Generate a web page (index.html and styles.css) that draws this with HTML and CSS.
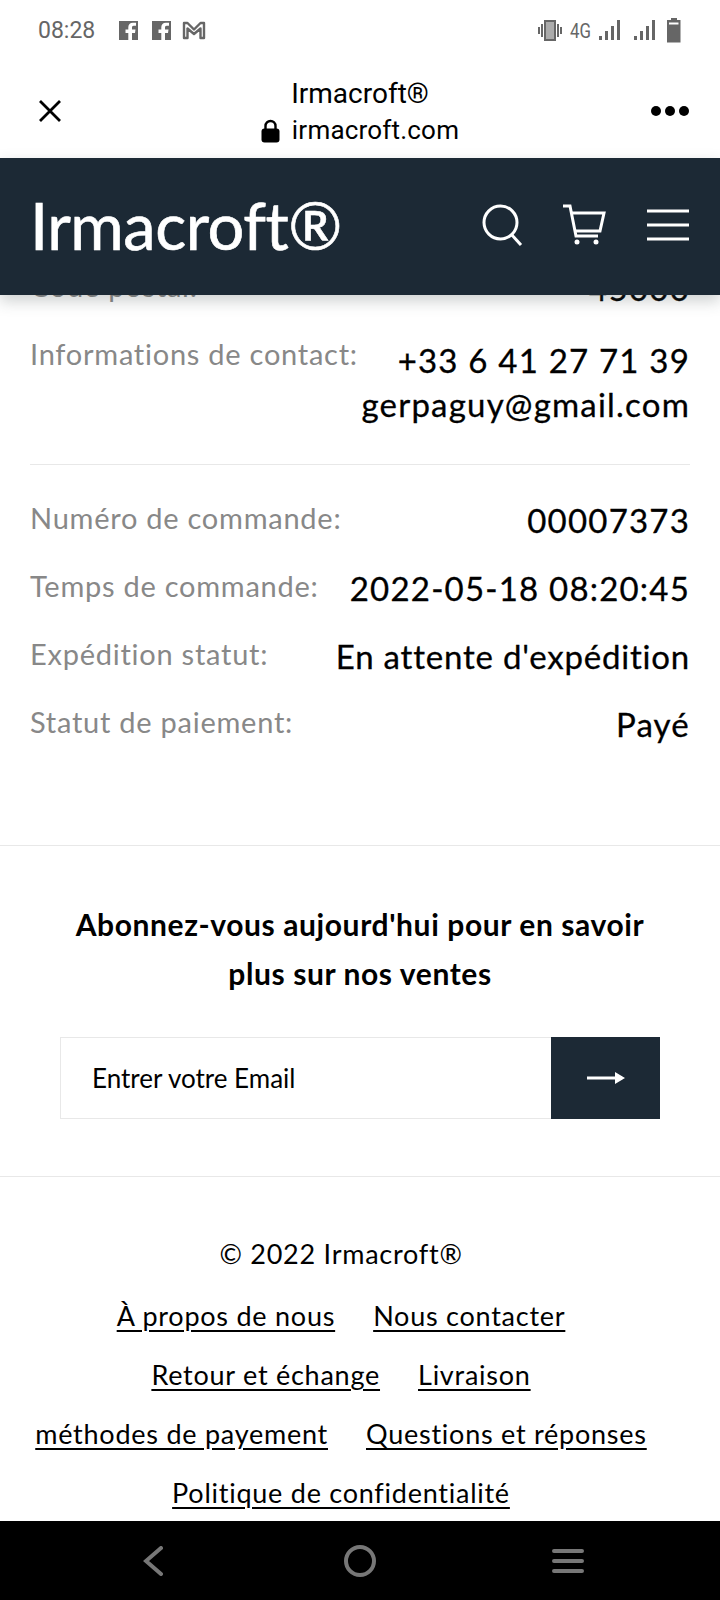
FILE: index.html
```html
<!DOCTYPE html>
<html lang="fr">

<head>
    <meta charset="UTF-8">
    <meta name="viewport" content="width=device-width, initial-scale=1.0">
    <title>Irmacroft®</title>
    <link rel="stylesheet" href="styles.css">
</head>

<body>
    <div id="phone">
        <div class="status flex-row">
            <span class="clock">08:28</span>
            <svg class="notif" width="88" height="22" viewBox="0 0 88 22">
                <path fill="#666" d="M1 2h19v19h-6v-7h3l.5-3.5H14V8.500c0-1 .5-1.700 1.700-1.700H18V3.700h-3c-3 0-4.700 1.800-4.700 4.500v2.300H7.500V14h2.800v7H1z"/>
                <path fill="#666" d="M34 2h19v19h-6v-7h3l.5-3.5H47V8.500c0-1 .5-1.700 1.700-1.700H51V3.700h-3c-3 0-4.700 1.800-4.700 4.500v2.300h-2.800V14h2.800v7H34z"/>
                <path fill="none" stroke="#666" stroke-width="2.400" stroke-linejoin="round" d="M66 4h3.500l6.500 6.500L82.500 4H86v15h-3.500V9.500L76 15l-6.500-5.500V19H66z"/>
            </svg>
            <span class="spring"></span>
            <svg width="148" height="26" viewBox="0 0 148 26">
                <g fill="#666">
                    <rect x="4" y="10" width="2" height="7"/>
                    <rect x="7" y="7" width="2" height="13"/>
                    <path d="M10 3h12v21H10zm2 2v17h8V5z"/>
                    <rect x="12" y="5" width="8" height="17" opacity=".55"/>
                    <rect x="23" y="7" width="2" height="13"/>
                    <rect x="26" y="10" width="2" height="7"/>
                    <rect x="65" y="19" width="3" height="4"/>
                    <rect x="71" y="14" width="3" height="9"/>
                    <rect x="77" y="9" width="3" height="14"/>
                    <rect x="83" y="3" width="3" height="20"/>
                    <rect x="100" y="19" width="3" height="4"/>
                    <rect x="106" y="14" width="3" height="9"/>
                    <rect x="112" y="9" width="3" height="14"/>
                    <rect x="118" y="3" width="3" height="20"/>
                    <path d="M137 1h6v2h3.500v22.500H133V3h4zM135 5.500v2h9.500v-2z"/>
                </g>
                <text x="36" y="21" class="net" textLength="21" lengthAdjust="spacingAndGlyphs">4G</text>
            </svg>
        </div>

        <div class="browser flex-row">
            <svg class="close" width="24" height="24" viewBox="0 0 24 24">
                <path fill="none" stroke="#000" stroke-width="2.800" d="M2 2l20 20M22 2L2 22"/>
            </svg>
            <div class="page-id">
                <div class="page-title">Irmacroft®</div>
                <div class="page-url">
                    <svg width="19" height="24" viewBox="0 0 19 24">
                        <path fill="none" stroke="#000" stroke-width="2.400" d="M4.500 11V7a5 5 0 0 1 10 0v4"/>
                        <rect x="0.500" y="9.500" width="18" height="14" rx="3"/>
                    </svg>
                    <span>irmacroft.com</span>
                </div>
            </div>
            <svg class="dots" width="40" height="12" viewBox="0 0 40 12">
                <circle cx="6" cy="6" r="5"/>
                <circle cx="20" cy="6" r="5"/>
                <circle cx="34" cy="6" r="5"/>
            </svg>
        </div>

        <header class="site-head flex-row">
            <a class="logo">Irmacroft®</a>
            <svg class="head-icon search" width="42" height="42" viewBox="0 0 42 42">
                <circle cx="18.500" cy="18.500" r="16.500"/>
                <path d="M29 30l10 11"/>
            </svg>
            <svg class="head-icon cart" width="44" height="42" viewBox="0 0 44 42">
                <path d="M1 2h7l6 30h22"/>
                <path d="M9 9h33l-4 18H13"/>
                <circle cx="15" cy="38" r="2.500" class="fill"/>
                <circle cx="34" cy="38" r="2.500" class="fill"/>
            </svg>
            <svg class="head-icon burger" width="42" height="32" viewBox="0 0 42 32">
                <path d="M0 2h42M0 16h42M0 30h42"/>
            </svg>
        </header>

        <main class="scroll">
            <section class="order">
                <div class="row">
                    <span class="label">Code postal:</span>
                    <span class="value">45000</span>
                </div>
                <div class="row contact">
                    <span class="label">Informations de contact:</span>
                    <span class="value">+33 6 41 27 71 39<br>gerpaguy@gmail.com</span>
                </div>
                <div class="rule"></div>
                <div class="row">
                    <span class="label">Numéro de commande:</span>
                    <span class="value">00007373</span>
                </div>
                <div class="row">
                    <span class="label">Temps de commande:</span>
                    <span class="value">2022-05-18 08:20:45</span>
                </div>
                <div class="row">
                    <span class="label">Expédition statut:</span>
                    <span class="value tight">En attente d'expédition</span>
                </div>
                <div class="row">
                    <span class="label">Statut de paiement:</span>
                    <span class="value">Payé</span>
                </div>
            </section>

            <section class="subscribe">
                <h3>Abonnez-vous aujourd'hui pour en savoir<br>plus sur nos ventes</h3>
                <form class="sub-form flex-row">
                    <div class="sub-input">Entrer votre Email</div>
                    <div class="sub-btn">
                        <svg width="38" height="14" viewBox="0 0 38 14">
                            <path fill="#fff" d="M0 5.500h28V1l10 6-10 6V8.500H0z"/>
                        </svg>
                    </div>
                </form>
            </section>

            <footer class="foot">
                <p class="copy">© 2022 Irmacroft®</p>
                <div class="foot-links">
                    <a>À propos de nous</a>
                    <a>Nous contacter</a>
                </div>
                <div class="foot-links">
                    <a>Retour et échange</a>
                    <a>Livraison</a>
                </div>
                <div class="foot-links">
                    <a>méthodes de payement</a>
                    <a>Questions et réponses</a>
                </div>
                <div class="foot-links">
                    <a>Politique de confidentialité</a>
                </div>
            </footer>
        </main>

        <nav class="softkeys flex-row">
            <svg width="20" height="30" viewBox="0 0 20 30">
                <path d="M18 2L3 15l15 13"/>
            </svg>
            <svg class="home" width="32" height="32" viewBox="0 0 32 32">
                <circle cx="16" cy="16" r="14"/>
            </svg>
            <svg width="32" height="26" viewBox="0 0 32 26">
                <path d="M2 3h28M2 13h28M2 23h28"/>
            </svg>
        </nav>
    </div>
</body>

</html>
```

FILE: styles.css
```css
html,
body,
h3,
p {
    padding: 0;
    margin: 0;
}

body {
    background-color: #fff;
    font-family: "Lato", "Noto Sans", sans-serif;
    color: #000;
}

.flex-row {
    display: flex;
    flex-direction: row;
    align-items: center;
}

#phone {
    width: 720px;
    height: 1600px;
    display: flex;
    flex-direction: column;
    overflow: hidden;
}

/* status bar */
.status {
    height: 68px;
    padding: 0 38px 8px 38px;
    box-sizing: border-box;
    flex-shrink: 0;
}

.status .clock {
    font-family: "Roboto", sans-serif;
    font-size: 23px;
    color: #666;
    width: 80px;
}

.status .spring {
    flex: 1;
}

.status .net {
    font-family: "Roboto", sans-serif;
    font-size: 20px;
    fill: #666;
}

/* in-app browser bar */
.browser {
    height: 90px;
    box-sizing: border-box;
    padding: 0 30px 5px 38px;
    flex-shrink: 0;
    justify-content: space-between;
}

.page-id {
    text-align: center;
    font-family: "Roboto", sans-serif;
    margin-left: 8px;
    padding-top: 3px;
}

.page-title {
    font-size: 28px;
    line-height: 37px;
}

.page-url {
    font-size: 26px;
    line-height: 37px;
    display: flex;
    align-items: center;
    justify-content: center;
    gap: 12px;
    letter-spacing: .2px;
}

/* shop header */
.site-head {
    height: 137px;
    box-sizing: border-box;
    flex-shrink: 0;
    background-color: #1c2935;
    padding: 0 31px 4px 30px;
    position: relative;
    z-index: 2;
    box-shadow: 0 6px 14px rgba(60, 70, 70, .25);
}

.logo {
    font-size: 65px;
    color: #fff;
    flex: 1;
    letter-spacing: -.5px;
    -webkit-text-stroke: .6px #fff;
}

.head-icon {
    fill: none;
    stroke: #fff;
    stroke-width: 3;
}

.head-icon .fill {
    fill: #fff;
    stroke: none;
}

.search {
    margin-right: 38px;
}

.cart {
    margin-right: 41px;
}

/* page body */
.scroll {
    flex: 1;
    overflow: hidden;
    min-height: 0;
}

.order {
    margin-top: -29px;
    padding: 0 30px 75px 30px;
    border-bottom: 1px solid #e8e8e8;
}

.row {
    display: flex;
    justify-content: space-between;
    align-items: flex-start;
    height: 68px;
}

.row.contact {
    height: 130px;
}

.label {
    font-size: 29px;
    line-height: 40px;
    color: #888;
    letter-spacing: .75px;
}

.value {
    font-size: 33px;
    line-height: 44px;
    text-align: right;
    letter-spacing: 1.2px;
    -webkit-text-stroke: .3px #000;
}

.value.tight {
    letter-spacing: .8px;
}

.contact .value {
    margin-top: 4px;
}

.rule {
    height: 1px;
    background-color: #e8e8e8;
    margin-bottom: 33px;
}

.subscribe {
    padding: 54px 60px 57px 60px;
    border-bottom: 1px solid #e8e8e8;
}

.subscribe h3 {
    font-size: 30px;
    font-weight: 700;
    line-height: 49px;
    letter-spacing: .6px;
    text-align: center;
    margin-bottom: 39px;
}

.sub-form {
    height: 82px;
    align-items: stretch;
}

.sub-input {
    flex: 1;
    border: 1px solid #e8e8e8;
    border-right: none;
    font-size: 26px;
    line-height: 80px;
    padding-left: 31px;
}

.sub-btn {
    width: 109px;
    background-color: #1c2935;
    display: flex;
    align-items: center;
    justify-content: center;
}

.foot {
    padding: 55px 38px 0 0;
    text-align: center;
    font-size: 27px;
    letter-spacing: .75px;
}

.copy {
    line-height: 44px;
    margin-bottom: 20px;
}

.foot-links {
    display: flex;
    justify-content: center;
    gap: 38px;
    height: 59px;
    line-height: 40px;
}

.foot-links a {
    text-decoration: underline;
    text-underline-offset: 4px;
}

/* android soft keys */
.softkeys {
    height: 79px;
    flex-shrink: 0;
    background-color: #000;
    justify-content: space-between;
    padding: 0 136px 0 143px;
}

.softkeys svg {
    fill: none;
    stroke: #777;
    stroke-width: 4;
    stroke-linecap: round;
}

.softkeys .home {
    margin-left: 4px;
}
```
